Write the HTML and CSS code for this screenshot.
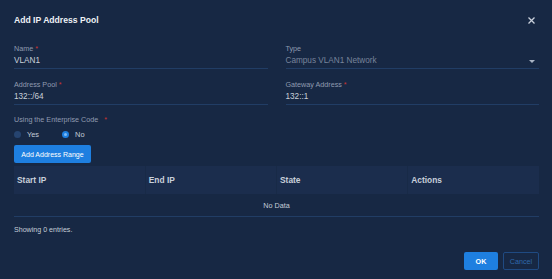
FILE: index.html
```html
<!DOCTYPE html>
<html lang="en">

<head>
    <meta charset="UTF-8">
    <meta name="viewport" content="width=device-width, initial-scale=1.0">
    <title>Add IP Address Pool</title>
    <link rel="stylesheet" href="styles.css">
</head>

<body>
    <div class="dialog">
        <div class="dialog-head">
            <h1>Add IP Address Pool</h1>
            <a href="#" class="close">
                <svg width="9" height="9" viewBox="0 0 9 9">
                    <path d="M1.5 1.5L7.5 7.5M7.5 1.5L1.5 7.5" stroke="#c9d0dc" stroke-width="1.3" />
                </svg>
            </a>
        </div>

        <form class="pool-form">
            <div class="field">
                <label>Name <span class="req">*</span></label>
                <div class="value">VLAN1</div>
            </div>
            <div class="field">
                <label>Type</label>
                <div class="value select">
                    Campus VLAN1 Network
                    <span class="caret"></span>
                </div>
            </div>
            <div class="field">
                <label>Address Pool <span class="req">*</span></label>
                <div class="value">132::/64</div>
            </div>
            <div class="field">
                <label>Gateway Address <span class="req">*</span></label>
                <div class="value">132::1</div>
            </div>
        </form>

        <div class="code-label">Using the Enterprise Code <span class="req">*</span></div>
        <div class="radios">
            <label class="radio"><span class="dot"></span>Yes</label>
            <label class="radio"><span class="dot on"></span>No</label>
        </div>

        <button class="btn btn-primary add-range">Add Address Range</button>

        <table class="range-table">
            <thead>
                <tr>
                    <th>Start IP</th>
                    <th>End IP</th>
                    <th>State</th>
                    <th>Actions</th>
                </tr>
            </thead>
            <tbody>
                <tr>
                    <td colspan="4" class="empty">No Data</td>
                </tr>
            </tbody>
        </table>

        <div class="count">Showing 0 entries.</div>

        <div class="dialog-foot">
            <button class="btn btn-primary ok">OK</button>
            <button class="btn btn-outline">Cancel</button>
        </div>
    </div>
</body>

</html>
```

FILE: styles.css
```css
body {
    margin: 0;
    background: #172844;
    font-family: "Liberation Sans", Arial, sans-serif;
    color: #c5cdd8;
}

.dialog {
    width: 552px;
    height: 279px;
    box-sizing: border-box;
    padding: 0 13px 0 14px;
}

.dialog-head {
    height: 42px;
    display: flex;
    align-items: center;
    justify-content: space-between;
}

.dialog-head h1 {
    margin: 0 0 2px;
    font-size: 8.6px;
    font-weight: bold;
    color: #eef1f6;
}

.close {
    display: flex;
    margin: 0 3px 2px 0;
}

.pool-form {
    display: grid;
    grid-template-columns: 1fr 1fr;
    column-gap: 18px;
    row-gap: 10px;
    margin-top: 1px;
}

.field label {
    display: block;
    height: 12px;
    line-height: 12px;
    font-size: 7.2px;
    color: #8f9bb0;
}

.req {
    color: #d0342f;
}

.field .value {
    height: 12px;
    line-height: 12px;
    padding-bottom: 1px;
    font-size: 8.2px;
    color: #c9d0da;
    border-bottom: 1px solid #213d65;
    display: flex;
    align-items: center;
}

.value.select {
    color: #77849b;
    justify-content: space-between;
}

.caret {
    width: 0;
    height: 0;
    margin-right: 4px;
    border-left: 3px solid transparent;
    border-right: 3px solid transparent;
    border-top: 3px solid #aab4c4;
}

.code-label {
    margin-top: 9px;
    height: 12px;
    line-height: 12px;
    font-size: 7.2px;
    color: #8f9bb0;
}

.code-label .req {
    margin-left: 4px;
}

.radios {
    display: flex;
    gap: 23px;
    height: 12px;
    margin-top: 2px;
}

.radio {
    display: flex;
    align-items: center;
    gap: 6px;
    font-size: 7.4px;
    color: #c5cdd8;
}

.dot {
    width: 7px;
    height: 7px;
    border-radius: 50%;
    background: #264470;
}

.dot.on {
    box-sizing: border-box;
    background: #7fbaf4;
    border: 2px solid #1e7fe0;
}

.btn {
    font-family: inherit;
    border-radius: 2px;
    border: 1px solid transparent;
    cursor: pointer;
}

.btn-primary {
    background: #1e7fe0;
    color: #fff;
}

.btn-outline {
    background: transparent;
    border-color: #1f4a82;
    color: #3068ab;
}

.add-range {
    display: block;
    margin-top: 5px;
    width: 77px;
    height: 18px;
    padding: 0;
    font-size: 7px;
}

.range-table {
    width: 100%;
    margin-top: 3px;
    border-collapse: collapse;
    table-layout: fixed;
}

.range-table th {
    height: 28px;
    padding: 0 3px;
    text-align: left;
    font-size: 8.4px;
    font-weight: bold;
    color: #c8cfda;
    background: #1b2d4d;
    border-left: 1px solid #182a47;
}

.range-table th:first-child {
    border-left: none;
}

.range-table td.empty {
    height: 22px;
    padding: 0;
    text-align: center;
    font-size: 7.2px;
    color: #c5cdd8;
    border-bottom: 1px solid #213d65;
}

.count {
    margin-top: 7px;
    height: 12px;
    line-height: 12px;
    font-size: 7.1px;
    color: #c5cdd8;
}

.dialog-foot {
    display: flex;
    justify-content: flex-end;
    gap: 5px;
    margin-top: 16px;
}

.dialog-foot .btn {
    height: 18px;
    padding: 0;
    font-size: 7.2px;
}

.ok {
    width: 34px;
    font-weight: bold;
}

.btn-outline {
    width: 36px;
}
```
